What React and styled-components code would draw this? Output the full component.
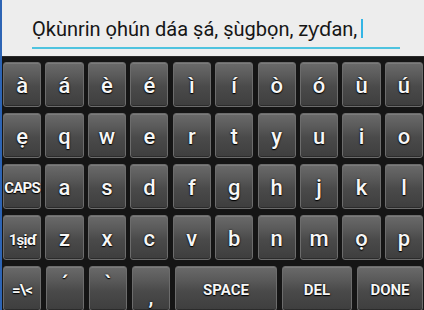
import React from "react";
import styled, { createGlobalStyle } from "styled-components";

const GlobalStyle = createGlobalStyle`
  html, body {
    margin: 0;
    padding: 0;
    background: #141414;
  }
  #root {
    width: 424px;
    height: 310px;
    overflow: hidden;
  }
`;

const Screen = styled.div`
  width: 424px;
  height: 310px;
  display: flex;
  flex-direction: column;
  border-left: 2px solid #2d64b4;
  box-sizing: border-box;
  overflow: hidden;
  font-family: Roboto, "Noto Sans", "DejaVu Sans", sans-serif;
`;

const InputArea = styled.div`
  height: 57px;
  flex: none;
  background: #ededed;
  box-sizing: border-box;
  padding: 13px 24px 0 30px;
  border-bottom: 1px solid #2a2a2a;
`;

const Field = styled.div`
  display: flex;
  align-items: center;
  height: 36px;
  border-bottom: 2px solid #4ec3df;
  box-sizing: border-box;
  padding-bottom: 3px;
  font-size: 20px;
  color: #161616;
  white-space: nowrap;
`;

const Cursor = styled.span`
  display: inline-block;
  width: 2px;
  height: 19px;
  margin-left: 4px;
  background: #33b5e5;
`;

const Keyboard = styled.div`
  flex: 1;
  background: #151515;
  padding: 5px 1px 0 1px;
  display: flex;
  flex-direction: column;
  gap: 6px;
`;

const Row = styled.div`
  display: grid;
  grid-template-columns: ${(p) => p.$cols || "repeat(10, 1fr)"};
  column-gap: ${(p) => p.$gap || "4.3px"};
  height: 45px;
  flex: none;
`;

const Key = styled.div`
  display: flex;
  align-items: center;
  justify-content: center;
  padding-top: 2px;
  box-sizing: border-box;
  border-radius: 3px;
  border: 1px solid #6c6c6c;
  background: linear-gradient(
    to bottom,
    #6a6a6a 0%,
    #5a5a5a 30%,
    #4a4a4a 55%,
    #3e3e3e 100%
  );
  box-shadow: inset 0 1px 0 rgba(255, 255, 255, 0.12),
    inset 0 -1px 0 rgba(0, 0, 0, 0.3);
  color: #f6f6f6;
  font-size: ${(p) => (p.$small ? "15px" : "22px")};
  font-weight: ${(p) => (p.$small ? 700 : 500)};
  text-shadow: 0 0 2px #000, 0 1px 1px #000;
  letter-spacing: ${(p) => (p.$tight ? "-0.8px" : "0")};
  white-space: nowrap;
  overflow: visible;
`;

const Mark = styled.span`
  font-size: 22px;
  transform: translateY(${(p) => p.$shift || "0px"});
`;

const rows = [
  ["à", "á", "è", "é", "ì", "í", "ò", "ó", "ù", "ú"],
  ["ẹ", "q", "w", "e", "r", "t", "y", "u", "i", "o"],
  [{ l: "CAPS" }, "a", "s", "d", "f", "g", "h", "j", "k", "l"],
  [{ l: "1ṣịɗ" }, "z", "x", "c", "v", "b", "n", "m", "ọ", "p"],
];

export default function App() {
  return (
    <>
      <GlobalStyle />
      <Screen>
        <InputArea>
          <Field>
            Ọkùnrin ọhún dáa ṣá, ṣùgbọn, zƴɗan,
            <Cursor />
          </Field>
        </InputArea>
        <Keyboard>
          {rows.map((row, i) => (
            <Row key={i}>
              {row.map((k, j) =>
                typeof k === "string" ? (
                  <Key key={j}>{k}</Key>
                ) : (
                  <Key key={j} $small $tight>
                    {k.l}
                  </Key>
                )
              )}
            </Row>
          ))}
          <Row $cols="38px 38px 38px 38px 102px 70px 1fr" $gap="5px">
            <Key $small $tight>=\&lt;</Key>
            <Key>
              <Mark $shift="-6px">´</Mark>
            </Key>
            <Key>
              <Mark $shift="-6px">`</Mark>
            </Key>
            <Key>
              <Mark $shift="8px">,</Mark>
            </Key>
            <Key $small>SPACE</Key>
            <Key $small>DEL</Key>
            <Key $small>DONE</Key>
          </Row>
        </Keyboard>
      </Screen>
    </>
  );
}
